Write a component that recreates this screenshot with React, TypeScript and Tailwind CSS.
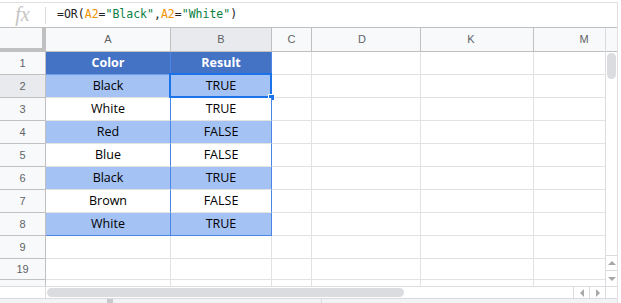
import React from 'react';

const rows = [
  { n: '1', a: 'Color', b: 'Result', kind: 'head' },
  { n: '2', a: 'Black', b: 'TRUE', kind: 'blue' },
  { n: '3', a: 'White', b: 'TRUE', kind: 'white' },
  { n: '4', a: 'Red', b: 'FALSE', kind: 'blue' },
  { n: '5', a: 'Blue', b: 'FALSE', kind: 'white' },
  { n: '6', a: 'Black', b: 'TRUE', kind: 'blue' },
  { n: '7', a: 'Brown', b: 'FALSE', kind: 'white' },
  { n: '8', a: 'White', b: 'TRUE', kind: 'blue' },
  { n: '9', a: '', b: '', kind: 'empty' },
  { n: '19', a: '', b: '', kind: 'empty' },
  { n: '20', a: '', b: '', kind: 'empty' },
];

function Tri({ dir }: { dir: 'up' | 'down' | 'left' | 'right' }) {
  const pts = {
    up: '0,5 4,1 8,5',
    down: '0,1 4,5 8,1',
    left: '5,0 1,4 5,8',
    right: '1,0 5,4 1,8',
  }[dir];
  const vert = dir === 'up' || dir === 'down';
  return (
    <svg width={vert ? 8 : 6} height={vert ? 6 : 8} viewBox={vert ? '0 0 8 6' : '0 0 6 8'}>
      <polygon points={pts} fill="#a8a8a8" />
    </svg>
  );
}

export default function App() {
  return (
    <div className="w-[621px] h-[303px] overflow-hidden bg-white pt-[2px] font-['Liberation_Sans',Arial,sans-serif]">
      <div className="w-[618px] border-t border-r border-[#e0e0e0]">
        {/* Formula bar */}
        <div className="flex items-center h-[25px] border-b border-[#c0c0c0]">
          <div className="w-[45px] flex justify-center">
            <span className="font-['Liberation_Serif',serif] italic text-[20px] leading-none text-[#c4c4c4] -mt-[2px]">fx</span>
          </div>
          <div className="w-px h-[17px] bg-[#dadce0]" />
          <div className="pl-[11px] font-['DejaVu_Sans_Mono',monospace] text-[11.5px] text-[#222] whitespace-pre">
            =OR(<span className="text-[#f09300]">A2</span>=<span className="text-[#0b8043]">"Black"</span>,<span className="text-[#f09300]">A2</span>=<span className="text-[#0b8043]">"White"</span>)
          </div>
        </div>

        {/* Grid + vertical scrollbar */}
        <div className="flex h-[258px]">
          <div className="w-[605px] overflow-hidden flex flex-col">
            {/* column headers */}
            <div className="flex h-[24px] shrink-0 text-[11px] text-[#5f6368]">
              <div className="w-[46px] shrink-0 bg-[#f8f9fa] border-r-4 border-b-4 border-[#c0c0c0]" />
              <div className="w-[125px] shrink-0 flex items-center justify-center bg-[#f8f9fa] border-r border-b border-[#c0c0c0]">A</div>
              <div className="w-[101px] shrink-0 flex items-center justify-center bg-[#e8eaed] border-r border-b border-[#c0c0c0]">B</div>
              <div className="w-[40px] shrink-0 flex items-center justify-center bg-[#f8f9fa] border-r border-b border-[#c0c0c0]">C</div>
              <div className="w-[109px] shrink-0 flex items-center justify-center pr-[8px] bg-[#f8f9fa] border-r border-b border-[#c0c0c0]">D</div>
              <div className="w-[113px] shrink-0 flex items-center justify-center pr-[12px] bg-[#f8f9fa] border-r border-b border-[#c0c0c0]">K</div>
              <div className="w-[71px] shrink-0 flex items-center justify-center pl-[29px] bg-[#f8f9fa] border-b border-[#c0c0c0]">M</div>
            </div>

            {rows.map((r) => {
              const h = r.n === '19' ? 'h-[21px]' : 'h-[23px]';
              const cellBg =
                r.kind === 'head' ? 'bg-[#4472c4] text-white font-bold' : r.kind === 'blue' ? 'bg-[#a4c2f4] text-black' : 'bg-white text-black';
              const inTable = r.kind !== 'empty';
              const bottom = r.n === '8' ? 'border-b-[#4a86e8]' : r.n === '1' ? 'border-b-[#6d9eeb]' : 'border-b-[#e2e2e3]';
              return (
                <div key={r.n} className={`flex shrink-0 ${h}`}>
                  <div
                    className={`w-[46px] shrink-0 flex items-center justify-center text-[11px] text-[#5f6368] border-r border-b border-[#c0c0c0] ${
                      r.n === '2' ? 'bg-[#e8eaed]' : 'bg-[#f8f9fa]'
                    }`}
                  >
                    {r.n}
                  </div>
                  {inTable ? (
                    <>
                      <div className={`w-[125px] shrink-0 flex items-center justify-center font-['Open_Sans',sans-serif] text-[12.5px] border-b border-r border-r-[#4a86e8] ${bottom} ${cellBg}`}>
                        {r.a}
                      </div>
                      <div className={`relative w-[101px] shrink-0 flex items-center justify-center font-['Open_Sans',sans-serif] text-[12.5px] border-b border-r border-r-[#4a86e8] ${bottom} ${cellBg}`}>
                        {r.b}
                        {r.n === '2' && (
                          <>
                            <div className="absolute -left-[2px] -top-[2px] -right-[1px] -bottom-[1px] border-2 border-[#1a73e8]" />
                            <div className="absolute -right-[4px] -bottom-[4px] w-[7px] h-[7px] bg-[#1a73e8] border border-white" />
                          </>
                        )}
                      </div>
                    </>
                  ) : (
                    <>
                      <div className="w-[125px] shrink-0 border-r border-b border-[#e2e2e3]" />
                      <div className="w-[101px] shrink-0 border-r border-b border-[#e2e2e3]" />
                    </>
                  )}
                  <div className="w-[40px] shrink-0 border-r border-b border-[#e2e2e3]" />
                  <div className="w-[109px] shrink-0 border-r border-b border-[#e2e2e3]" />
                  <div className="w-[113px] shrink-0 border-r border-b border-[#e2e2e3]" />
                  <div className="w-[71px] shrink-0 border-b border-[#e2e2e3]" />
                </div>
              );
            })}
          </div>

          {/* vertical scrollbar */}
          <div className="w-[12px] flex flex-col border-l border-[#dadce0]">
            <div className="h-[24px] shrink-0 bg-[#f8f9fa] border-b border-[#c0c0c0]" />
            <div className="flex-1 flex justify-center pt-[1px]">
              <div className="w-[9px] h-[26px] rounded-full bg-[#dadce0]" />
            </div>
            <div className="h-[15px] shrink-0 border-t border-[#dadce0] flex items-center justify-center">
              <Tri dir="up" />
            </div>
            <div className="h-[16px] shrink-0 border-t border-[#dadce0] flex items-center justify-center">
              <Tri dir="down" />
            </div>
          </div>
        </div>

        {/* horizontal scrollbar */}
        <div className="flex h-[12px] border-t border-[#dadce0]">
          <div className="w-[46px] shrink-0 border-r border-[#dadce0]" />
          <div className="w-[527px] shrink-0 flex items-center pl-[1px]">
            <div className="w-[357px] h-[9px] rounded-full bg-[#dadce0]" />
          </div>
          <div className="w-[16px] shrink-0 border-l border-[#dadce0] flex items-center justify-center">
            <Tri dir="left" />
          </div>
          <div className="w-[16px] shrink-0 border-l border-[#dadce0] flex items-center justify-center">
            <Tri dir="right" />
          </div>
          <div className="flex-1 border-l border-[#dadce0]" />
        </div>

        {/* sheet tab strip */}
        <div className="flex h-[6px] border-t border-[#dadce0] bg-[#f1f3f4]">
          <div className="w-[107px] shrink-0" />
          <div className="w-[6px] shrink-0 bg-[#c8cacd]" />
          <div className="w-[209px] shrink-0 border-r border-[#dadce0]" />
        </div>
      </div>
    </div>
  );
}
